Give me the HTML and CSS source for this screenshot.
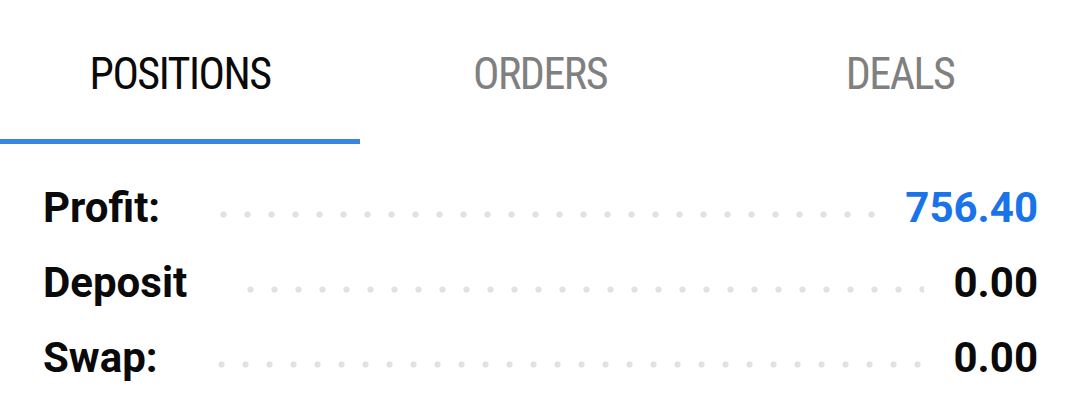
FILE: index.html
```html
<!DOCTYPE html>
<html>
<head>
<meta charset="utf-8">
<link rel="stylesheet" href="styles.css">
</head>
<body>
<div class="screen">
  <nav class="tabs">
    <div class="tab active"><span class="tab-label">POSITIONS</span></div>
    <div class="tab"><span class="tab-label">ORDERS</span></div>
    <div class="tab"><span class="tab-label">DEALS</span></div>
  </nav>
  <div class="list">
    <div class="row"><span class="label">Profit:</span><span class="dots"></span><span class="value profit">756.40</span></div>
    <div class="row"><span class="label">Deposit</span><span class="dots"></span><span class="value">0.00</span></div>
    <div class="row"><span class="label">Swap:</span><span class="dots"></span><span class="value">0.00</span></div>
  </div>
</div>
</body>
</html>
```
FILE: styles.css
```css
html, body {
  margin: 0;
  padding: 0;
  background: #ffffff;
}
.screen {
  width: 1080px;
  height: 404px;
  overflow: hidden;
  font-family: Roboto, "Liberation Sans", sans-serif;
}
.tabs {
  display: flex;
  height: 144px;
}
.tab {
  flex: 1;
  box-sizing: border-box;
  display: flex;
  justify-content: center;
  padding-top: 48px;
  border-bottom: 5px solid transparent;
}
.tab.active {
  border-bottom-color: #3a84e4;
}
.tab-label {
  font-family: "Roboto Condensed", Roboto, sans-serif;
  font-stretch: condensed;
  font-size: 44px;
  line-height: 52px;
  color: #808080;
  letter-spacing: -1.5px;
}
.tab.active .tab-label {
  color: #0a0a0a;
}
.list {
  padding: 26px 42px 0 43px;
}
.row {
  display: flex;
  height: 75px;
  line-height: 75px;
  font-size: 42px;
  font-weight: 700;
  color: #0a0a0a;
}
.dots {
  flex: 1;
  align-self: flex-start;
  height: 7px;
  margin: 41px 30px 0 60px;
  background-image: radial-gradient(circle at 3.5px 3.5px, #e2e2e2 2.8px, rgba(226,226,226,0) 3.5px);
  background-size: 24px 7px;
  background-repeat: repeat-x;
}
.value.profit {
  color: #1a73e8;
}
```
